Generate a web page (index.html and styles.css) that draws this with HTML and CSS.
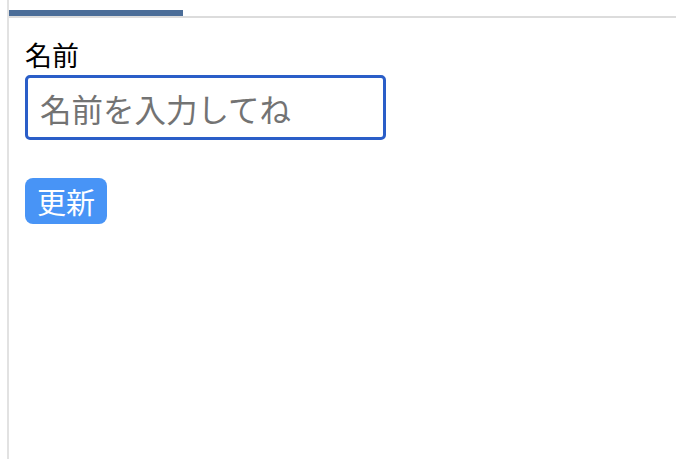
FILE: index.html
```html
<!DOCTYPE html>
<html lang="ja">
<head>
<meta charset="utf-8">
<link rel="stylesheet" href="styles.css">
</head>
<body>
<div class="frame">
  <div class="tabs"><div class="tab-indicator"></div></div>
  <div class="content">
    <label class="label" for="name">名前</label>
    <input class="input" id="name" type="text" placeholder="名前を入力してね">
    <button class="btn" type="button">更新</button>
  </div>
</div>
</body>
</html>
```
FILE: styles.css
```css
html, body {
  margin: 0;
  padding: 0;
  background: #fff;
  height: 100%;
}
body {
  font-family: "Noto Sans CJK JP", "Noto Sans", sans-serif;
  color: #000;
}
.frame {
  margin-left: 7px;
  border-left: 2px solid #e2e2e2;
  min-height: 100%;
  box-sizing: border-box;
}
.tabs {
  padding-top: 10px;
  border-bottom: 2px solid #dcdcdc;
}
.tab-indicator {
  width: 174px;
  height: 6px;
  background: #4b6d98;
}
.content {
  padding: 0 16px;
  display: flex;
  flex-direction: column;
  align-items: flex-start;
}
.label {
  font-size: 27px;
  line-height: 36px;
  margin-top: 19px;
}
.input {
  box-sizing: border-box;
  width: 361px;
  height: 65px;
  border: 3px solid #2a5ec8;
  border-radius: 5px;
  padding: 0 12px;
  font-family: "Noto Sans CJK JP", "Noto Sans", sans-serif;
  font-size: 31.5px;
  outline: none;
  margin-top: 2px;
}
.input::placeholder {
  color: #737373;
}
.btn {
  margin-top: 38px;
  box-sizing: border-box;
  height: 46px;
  padding: 0 12px;
  border: none;
  border-radius: 8px;
  background: #4894f6;
  color: #fff;
  font-family: "Noto Sans CJK JP", "Noto Sans", sans-serif;
  font-size: 29px;
  line-height: 46px;
}
```
